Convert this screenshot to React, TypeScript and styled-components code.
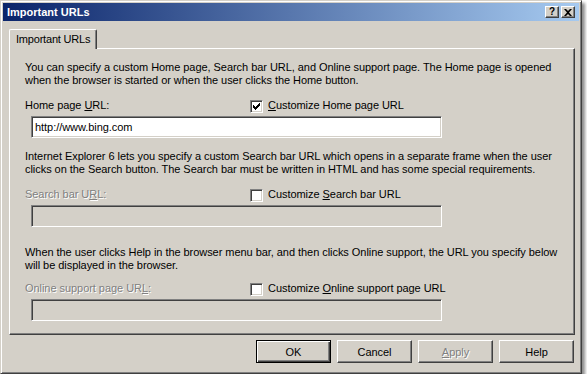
import React from 'react'
import styled, { createGlobalStyle } from 'styled-components'

const GlobalStyle = createGlobalStyle`
  html, body {
    margin: 0;
    padding: 0;
    background: #ffffff;
  }
  body {
    font-family: "Liberation Sans", Arial, sans-serif;
    font-size: 11px;
    letter-spacing: -0.05px;
    color: #000;
  }
`

const face = '#d4d0c8'
const shadow = '#808080'
const darkShadow = '#404040'

const Window = styled.div`
  box-sizing: border-box;
  width: 582px;
  height: 374px;
  padding: 2px;
  background: ${face};
  border: 1px solid;
  border-color: ${face} ${darkShadow} ${darkShadow} ${face};
  box-shadow: inset 1px 1px #fff, inset -1px -1px ${shadow}, 3px 3px 3px rgba(0, 0, 0, 0.45);
  display: flex;
  flex-direction: column;
`

const TitleBar = styled.div`
  height: 18px;
  display: flex;
  align-items: center;
  padding: 0 4px 0 4px;
  background: linear-gradient(to right, #0a246a, #a6caf0);
`

const Title = styled.div`
  flex: 1;
  color: #fff;
  font-weight: bold;
  font-size: 11px;
  letter-spacing: 0;
  line-height: 18px;
`

const CaptionButton = styled.div`
  box-sizing: border-box;
  width: 14px;
  height: 12px;
  margin-left: 2px;
  background: ${face};
  border: 1px solid;
  border-color: #fff ${darkShadow} ${darkShadow} #fff;
  box-shadow: inset -1px -1px ${shadow};
  display: flex;
  align-items: center;
  justify-content: center;
  font-weight: bold;
  font-size: 10px;
  line-height: 10px;
`

const Body = styled.div`
  flex: 1;
  display: flex;
  flex-direction: column;
  padding: 8px 4px 0 6px;
`

const TabStrip = styled.div`
  display: flex;
  height: 20px;
`

const Tab = styled.div`
  position: relative;
  z-index: 1;
  box-sizing: border-box;
  height: 20px;
  padding: 3px 6px 0 6px;
  background: ${face};
  border-top: 1px solid #fff;
  border-left: 1px solid #fff;
  border-right: 1px solid ${darkShadow};
  border-radius: 2px 2px 0 0;
  box-shadow: inset -1px 0 ${shadow};
  line-height: 13px;
  letter-spacing: -0.2px;
  white-space: nowrap;
`

const Panel = styled.div`
  box-sizing: border-box;
  width: 566px;
  height: 287px;
  margin-top: -1px;
  padding: 0 0 0 15px;
  border: 1px solid;
  border-color: #fff ${darkShadow} ${darkShadow} #fff;
  box-shadow: inset -1px -1px ${shadow};
  display: flex;
  flex-direction: column;
`

const Section = styled.div<{ $top: number }>`
  display: flex;
  flex-direction: column;
  margin-top: ${(p) => p.$top}px;
`

const Para = styled.div`
  line-height: 13px;
  white-space: nowrap;
`

const LabelRow = styled.div<{ $gap: number }>`
  display: flex;
  align-items: flex-start;
  height: 13px;
  margin-top: ${(p) => p.$gap}px;
  line-height: 13px;
  white-space: nowrap;
`

const FieldLabel = styled.div<{ $disabled?: boolean }>`
  width: 225px;
  color: ${(p) => (p.$disabled ? shadow : '#000')};
  text-shadow: ${(p) => (p.$disabled ? '1px 1px 0 #fff' : 'none')};
`

const CheckLabel = styled.label`
  display: flex;
  align-items: flex-start;
  gap: 5px;
`

const Box = styled.span`
  box-sizing: border-box;
  width: 13px;
  height: 13px;
  margin-top: 1px;
  background: #fff;
  border: 1px solid;
  border-color: ${shadow} #fff #fff ${shadow};
  box-shadow: inset 1px 1px ${darkShadow}, inset -1px -1px ${face};
  display: flex;
  align-items: center;
  justify-content: center;
`

const Field = styled.div<{ $disabled?: boolean }>`
  box-sizing: border-box;
  width: 411px;
  height: 22px;
  margin: 4px 0 0 6px;
  padding: 4px 0 0 3px;
  background: ${(p) => (p.$disabled ? face : '#fff')};
  border: 1px solid;
  border-color: ${shadow} #fff #fff ${shadow};
  box-shadow: inset 1px 1px ${darkShadow}, inset -1px -1px ${face};
  line-height: 13px;
`

const ButtonRow = styled.div`
  display: flex;
  justify-content: flex-end;
  gap: 6px;
  margin-top: 5px;
  padding-right: 1px;
`

const Button = styled.div<{ $default?: boolean; $disabled?: boolean }>`
  box-sizing: border-box;
  width: 75px;
  height: 23px;
  display: flex;
  align-items: center;
  justify-content: center;
  background: ${face};
  border: 1px solid;
  border-color: ${(p) => (p.$default ? '#000' : `#fff ${darkShadow} ${darkShadow} #fff`)};
  box-shadow: ${(p) =>
    p.$default
      ? `inset 1px 1px #fff, inset -1px -1px ${darkShadow}, inset -2px -2px ${shadow}`
      : `inset -1px -1px ${shadow}`};
  color: ${(p) => (p.$disabled ? shadow : '#000')};
  text-shadow: ${(p) => (p.$disabled ? '1px 1px 0 #fff' : 'none')};
`

const Check = () => (
  <svg width="7" height="7" viewBox="0 0 7 7">
    <path d="M0 2h1v1h1v1h1V3h1V2h1V1h1V0h1v3H6v1H5v1H4v1H3v1H2V6H1V5H0z" fill="#000" />
  </svg>
)

const CheckBox = ({ checked, children }: { checked?: boolean; children: React.ReactNode }) => (
  <CheckLabel>
    <Box>{checked && <Check />}</Box>
    <span>{children}</span>
  </CheckLabel>
)

export default function App() {
  return (
    <>
      <GlobalStyle />
      <Window>
        <TitleBar>
          <Title>Important URLs</Title>
          <CaptionButton>?</CaptionButton>
          <CaptionButton>
            <svg width="8" height="7" viewBox="0 0 8 7">
              <path d="M0 0h2l2 2 2-2h2L5 3.5 8 7H6L4 5 2 7H0l3-3.5z" fill="#000" />
            </svg>
          </CaptionButton>
        </TitleBar>
        <Body>
          <TabStrip>
            <Tab>Important URLs</Tab>
          </TabStrip>
          <Panel>
            <Section $top={12}>
              <Para>
                You can specify a custom Home page, Search bar URL, and Online support page. The Home page is opened
                <br />
                when the browser is started or when the user clicks the Home button.
              </Para>
              <LabelRow $gap={12}>
                <FieldLabel>
                  Home page <u>U</u>RL:
                </FieldLabel>
                <CheckBox checked>
                  <u>C</u>ustomize Home page URL
                </CheckBox>
              </LabelRow>
              <Field>http://www.bing.com</Field>
            </Section>
            <Section $top={12}>
              <Para>
                Internet Explorer 6 lets you specify a custom Search bar URL which opens in a separate frame when the user
                <br />
                clicks on the Search button. The Search bar must be written in HTML and has some special requirements.
              </Para>
              <LabelRow $gap={12}>
                <FieldLabel $disabled>
                  Search bar U<u>R</u>L:
                </FieldLabel>
                <CheckBox>
                  Customize <u>S</u>earch bar URL
                </CheckBox>
              </LabelRow>
              <Field $disabled />
            </Section>
            <Section $top={19}>
              <Para>
                When the user clicks Help in the browser menu bar, and then clicks Online support, the URL you specify below
                <br />
                will be displayed in the browser.
              </Para>
              <LabelRow $gap={10}>
                <FieldLabel $disabled>
                  Online support page UR<u>L</u>:
                </FieldLabel>
                <CheckBox>
                  Customize <u>O</u>nline support page URL
                </CheckBox>
              </LabelRow>
              <Field $disabled />
            </Section>
          </Panel>
          <ButtonRow>
            <Button $default>OK</Button>
            <Button>Cancel</Button>
            <Button $disabled>
              <u>A</u>pply
            </Button>
            <Button>Help</Button>
          </ButtonRow>
        </Body>
      </Window>
    </>
  )
}
